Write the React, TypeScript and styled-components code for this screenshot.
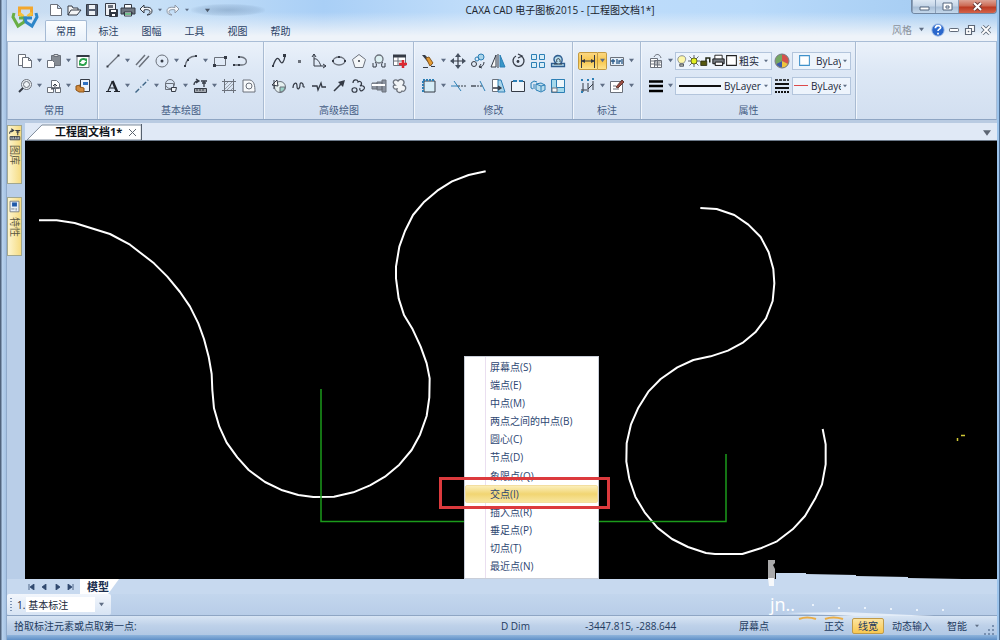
import React from "react";
import styled, { createGlobalStyle, css } from "styled-components";

const Global = createGlobalStyle`
  * { box-sizing: border-box; }
  body { margin: 0; background: #9dbfe6; }
  body, button, select, input {
    font-family: "Open Sans", "Noto Sans CJK SC", sans-serif;
    font-size: 10px;
    line-height: 14px;
    color: #2c4265;
  }
`;

/* ---------- icon artwork, all on a 16 unit grid ---------- */

const D = "#343a45";
const G = "#6b717b";
const B = "#2c7fb5";
const L = "#a9d4ea";

const art: Record<string, React.ReactNode> = {
  newFile: <path d="M2.500 2.500h7l4 4v7h-11zM9.500 2.500v4h4" fill="#fff" stroke={G} />,
  open: <path d="M2 13V4h4l1 2h5v2M2 13l3-5h10l-4 5z" fill="#f4f5f6" stroke={D} />,
  save: <><path d="M2.500 2.500h11v11h-11z" fill="#566072" stroke={D} /><path d="M5 3h6v4H5zM5 9h6v4H5z" fill="#eef2f6" /></>,
  saveAs: <><path d="M3.500 1.500h10v12h-10z" fill="#eef0f4" stroke={D} /><path d="M6 3h5v3H6z" fill={G} /><path d="M7.500 7.500h8v7h-8z" fill="#303640" stroke={D} /><path d="M9 8h5v2H9zM10 12h3v2h-3z" fill="#fff" /></>,
  print: <><path d="M4.500 6V2.500h7V6M4.500 10v4h7v-4" fill="#fff" stroke={D} /><path d="M1 6h14v6h-3v-2H4v2H1z" fill="#6f7681" stroke={D} /><path d="M5 12h6" stroke="#44a867" strokeWidth="1.500" /></>,
  undo: <path d="M2 7l4-4v2.500c6-1 8 1 8 3.500s-2 4-5 4c2-1 3-2 3-3.500S9 7 6 8v3z" fill="#f2f5f8" stroke={D} />,
  redo: <path d="M14 7l-4-4v2.500c-6-1-8 1-8 3.500s2 4 5 4c-2-1-3-2-3-3.500S7 7 10 8v3z" fill="#f2f5f8" stroke="#8e98a6" />,
  copy: <><path d="M1.500 1.500h7v11h-7z" fill="#fff" stroke={G} /><path d="M5.500 4.500h6l3 3v7h-9zM11.500 4.500v3h3" fill="#fff" stroke={G} /></>,
  paste: <><path d="M5.500 2.500h9v10h-9z" fill="#858b93" stroke={G} /><path d="M8 1.500h4v2H8z" fill="#ddd" stroke={G} /><path d="M1.500 7.500h5l2 2v5h-7z" fill="#fff" stroke={G} /></>,
  refresh: <><path d="M2 2.500h12v12H2z" fill="#fff" stroke={G} /><path d="M1.500 3h13" stroke={D} strokeWidth="2" /><path d="M5 9c0-3 4-4 6-2V5.500M11 9c0 3-4 4-6 2v1.500" fill="none" stroke="#2aa24c" strokeWidth="2" /></>,
  magnify: <><circle cx="9.500" cy="6.500" r="5" fill="#eef2f6" stroke={G} /><circle cx="9.500" cy="6.500" r="3" fill="none" stroke={G} /><path d="M6 10l-4 4" stroke={D} strokeWidth="2" /></>,
  insert: <><path d="M5.500 2.500h5l3 3v5h-8zM1.500 9.500h6v5h-6zM9.500 9.500h5v5h-5z" fill="#fff" stroke={G} /><path d="M5 11c4 0 4-1 4-5M7 8l2-2 2 2" fill="none" stroke={D} /></>,
  match: <><path d="M5.500 1.500h9v12h-9z" fill="#eaf2fb" stroke={D} /><path d="M8 4h5v3H8z" fill="#2e70c0" /><path d="M1 8l4-1v2l4 1v4H4L1 12z" fill="#d18a3d" stroke="#8d5418" /></>,
  line: <><path d="M3 13L13 3" stroke={G} strokeWidth="1.300" /><path d="M1.500 12.500h2v2h-2zM12.500 1.500h2v2h-2z" fill={D} /></>,
  parallel: <path d="M2 12L11 2M5 14l10-11" stroke={G} strokeWidth="1.500" fill="none" />,
  circle: <><circle cx="8" cy="8" r="6" fill="none" stroke={G} /><circle cx="8" cy="8" r="1.500" fill={D} /></>,
  arc: <><path d="M2 14C3 7 7 3 13 3" fill="none" stroke={G} strokeWidth="1.300" /><path d="M1 12h2v2H1zM12 2h2v2h-2zM4 6h2v2H4z" fill={D} /></>,
  rect: <><path d="M2.500 4.500h11v8h-11z" fill="none" stroke={G} /><path d="M1 11h3v3H1zM12 3h3v3h-3z" fill={D} /></>,
  pline: <><path d="M3 12h7c6 0 6-7-1-8H7" fill="none" stroke={G} strokeWidth="1.300" /><path d="M1 11h2v2H1zM6 11h2v2H6zM6 3h2v2H6z" fill={D} /></>,
  text: <><path d="M1 13.500h5M9 13.500h6M3 13L7.500 3M5 10h5" stroke="#20242c" strokeWidth="1.200" fill="none" /><path d="M7.500 3l4.500 10.500" stroke="#20242c" strokeWidth="2.500" /></>,
  axis: <path d="M1.500 14.500L15 1" stroke="#3d6485" strokeWidth="1.400" strokeDasharray="5 2 1 2" />,
  block: <><circle cx="7" cy="6" r="4.500" fill="none" stroke={G} /><path d="M2.500 5.500h8v6h-8z" fill="none" stroke={G} /><path d="M8.500 9.500h5l-1 4h-4z" fill="#eef2f6" stroke={D} /></>,
  gallery: <><path d="M2 7c0-3 2-4 4-4M4 1l3 2-3 2M9 3h6M12 3v6M10 5h4" fill="none" stroke={D} strokeWidth="1.300" /><path d="M2.500 10.500h12v4h-12z" fill="#a4a9b0" stroke={D} /><path d="M5 10v3M8 10v3M11 10v3" stroke={D} /></>,
  hatch: <><path d="M3.500 1v14M12.500 1v14M1 3.500h14M1 12.500h14" stroke={G} fill="none" /><path d="M4 7l3-3M4 11l7-7M6 12l6-6M10 12l2-2" stroke="#9aa0a8" fill="none" /></>,
  region: <><path d="M2 2h7c4 1 5 5 5 12H2z" fill="#f7f9fb" stroke={G} /><circle cx="8" cy="8" r="3" fill="none" stroke={G} /></>,
  spline: <><path d="M2 13c3-9 5-9 7-5s4 1 5-5" fill="none" stroke={D} strokeWidth="1.300" /><path d="M1 12h2v2H1zM12 1h3v3h-3z" fill={D} /></>,
  dot: <path d="M7 7h3v3H7z" fill={G} />,
  formula: <><path d="M3 1v12h12M1 4l2-3 2 3M12 11l3 2-3 2M3 6c3-1 5 2 7 7" fill="none" stroke={D} /></>,
  ellipse: <><ellipse cx="8" cy="8" rx="6" ry="4" fill="none" stroke={G} strokeWidth="1.300" /><path d="M1 7h2v2H1zM13 7h2v2h-2zM7 3h2v2H7z" fill={D} /></>,
  polygon: <><path d="M8 1.500l6.500 5-2.500 8H4l-2.500-8z" fill="#f3f6f8" stroke={G} /><circle cx="8" cy="8" r="1" fill={D} /></>,
  detail: <><circle cx="8" cy="6" r="4" fill="#ddf1f3" stroke={G} strokeWidth="1.300" /><path d="M2 14h3c1-3 0-4-1-5M14 14h-3c-1-3 0-4 1-5M2 14v-4M14 14v-4" fill="none" stroke={D} /></>,
  table: <><path d="M2.500 2.500h12v10h-12z" fill="#fff" stroke={G} /><path d="M2 3h13" stroke={D} strokeWidth="3" /><path d="M2 8h9M7 4v9" stroke={G} /><path d="M12 7v8M8 11h8" stroke="#dd2831" strokeWidth="2.500" /></>,
  section: <><circle cx="9" cy="9" r="5.500" fill="#e4efef" stroke={G} /><path d="M9 9h5a5 5 0 0 1-5 5z" fill="#9bd3c8" stroke={G} /><path d="M1 7l5-5 1 6zM3 2v9" fill="#fff" stroke={D} /></>,
  wave: <path d="M2 10c0-5 4-7 4-2s3 3 3-1 4-2 3 2M12 9h2" fill="none" stroke={D} strokeWidth="1.200" />,
  brk: <path d="M1 8h5l1 4 3-7 1 4h4" fill="none" stroke={D} strokeWidth="1.300" />,
  arrow: <><path d="M3 13l8-8" stroke={D} strokeWidth="1.600" /><path d="M14 2l-2 7-5-5z" fill={D} /></>,
  cloud3: <path d="M2 5c0-4 5-4 5-1 3-2 5 2 2 4 4-1 6 2 3 4-2 2-4 0-3-2M1 12c0-3 5-3 5 0s-5 3-5 0z" fill="none" stroke={D} strokeWidth="1.200" />,
  shaft: <><path d="M1 5h5v6H1zM6 4h5v8H6zM11 2h4v12h-4z" fill="#8b93a0" stroke={G} /><path d="M1 7h13" stroke="#fff" strokeWidth="2" /></>,
  revcloud: <path d="M4 7C0 4 4 0 7 3c3-4 8 0 5 4 5 1 2 8-1 6-2 3-6 1-5-2-4 1-5-4-2-4z" fill="#f1f4f6" stroke={G} strokeWidth="1.300" />,
  erase: <><path d="M1 2l3 0 8 8-2 3z" fill={D} /><path d="M5 5l3-1 4 6-3 3z" fill="#e39a31" stroke="#8a5b22" /><path d="M2 14.500h5M10 13.500h4" stroke={D} /></>,
  move: <><path d="M8 2v12M2 8h12" stroke={D} strokeWidth="1.200" /><path d="M8 0l3 4H5zM8 16l3-4H5zM0 8l4-3v6zM16 8l-4-3v6z" fill="#46505f" /></>,
  dup: <><circle cx="11" cy="4" r="3" fill={L} stroke={B} /><circle cx="7" cy="6" r="2" fill="none" stroke={B} /><circle cx="4" cy="11" r="2.500" fill="none" stroke={D} /><path d="M14 9c0 3-2 5-5 5M11 11l-2 3 3 1" fill="none" stroke={D} /></>,
  mirror: <><path d="M6 2v12H1z" fill="#f8f8f8" stroke={D} /><path d="M10 2v12h5z" fill="#3897c8" stroke={B} /><path d="M8 1v14" stroke={D} /></>,
  rotate: <><path d="M6 3a5.500 5.500 0 1 0 5 0M8 1l4 2-4 2" fill="none" stroke={D} strokeWidth="1.300" /><circle cx="8" cy="8.500" r="1.400" fill={D} /></>,
  array: <path d="M1.500 1.500h5v5h-5zM9.500 1.500h5v5h-5zM1.500 9.500h5v5h-5zM9.500 9.500h5v5h-5z" fill="#d7edf7" stroke={B} />,
  offset: <><path d="M1.500 13.500v-3h5c-4-3-3-7 1-8 5 0 6 5 3 8h4v3z" fill="#b7ddec" stroke="#2f5e90" strokeWidth="1.300" /><path d="M4 11h8M7 9c-2-4 4-5 3 0" fill="none" stroke={D} /></>,
  stretch: <><path d="M3 3h11v11H3z" fill="#d6edf7" stroke={D} /><path d="M2 14V2h12" fill="none" stroke={B} strokeWidth="2" strokeDasharray="2 1" /></>,
  trim: <><path d="M1 8h7M4 3l7 10" stroke={B} fill="none" /><path d="M8 8h8" stroke={D} strokeDasharray="2 1" /></>,
  extend: <><path d="M1 8h5" stroke={D} strokeWidth="1.300" /><path d="M7 8h5" stroke={D} strokeDasharray="2 1" /><path d="M10 3l5 10" stroke={B} /></>,
  scale: <><path d="M2.500 1.500h6v12h-6z" fill="#fff" stroke={G} /><path d="M8 2h3l4 12H8z" fill={L} stroke={B} /><path d="M3 10h7M8 8l3 2-3 2" fill="none" stroke={D} strokeWidth="1.300" /></>,
  breakAt: <><path d="M5 3.500H1.500v10h13v-10H11" fill="#eef4fa" stroke={D} /><path d="M3 3h4M9 3h4" stroke={B} strokeWidth="2" /></>,
  explode: <path d="M1 5l3-2 3 1M1 5v5l2 1M6 6l5-1 4 2v5l-4 2-5-2zM6 6l5 2 4-1M11 8v5M4 6v5" fill="#b9dded" stroke={B} />,
  corner: <><path d="M1.500 1.500h13v13h-13z" fill="#a5d9eb" stroke={B} /><path d="M6.500 1.500h8v8h-8z" fill="#eef7fb" stroke={B} /><path d="M2 10h5v4H2z" fill="#f6f9fb" stroke={G} /></>,
  dimension: <><path d="M1.500 2v13M14.500 2v13M2 8h12" stroke={D} /><path d="M1 8l4-2v4zM15 8l-4-2v4z" fill={D} /></>,
  tolerance: <><path d="M1.500 4.500h13v8h-13z" fill="#e5eff8" stroke={G} /><path d="M4 6v5M2 8h4M8 6v5M10 11V8h2M13 6v5" stroke="#285887" fill="none" strokeWidth="1.300" /></>,
  coord: <><path d="M3 5v9M8 5v9M13 3v9M1 12h6M8 11l5-5" stroke={D} fill="none" /><path d="M1 1h2v2H1zM7 1h2v2H7zM12 0h2v2h-2zM1 13h2v2H1z" fill={B} /></>,
  edit: <><path d="M1.500 3.500h12v11h-12z" fill="#fff" stroke={G} /><path d="M4 8h3M4 11h6" stroke={G} /><path d="M7 9l6-7 2 2-6 6z" fill="#9c4e42" stroke="#603630" /></>,
  layers: <><path d="M2.500 5.500h7v9h-7zM6.500 7.500h7v7h-7z" fill="#fff" stroke={G} /><path d="M6 4c2-4 6-3 7 1M3 8h5M3 11h9M7 9h6M7 12h6" fill="none" stroke={G} /></>,
  bulb: <><path d="M5 11c-5-5-2-10 3-10s7 5 2 10z" fill="#fdf7a9" stroke={G} /><path d="M5 12h5v3H5z" fill="#b8bbb1" stroke={D} /></>,
  sun: <><path d="M8 0v16M0 8h16M2 2l12 12M14 2L2 14" stroke={D} /><circle cx="8" cy="8" r="4" fill="#e2ee24" stroke="#404508" /></>,
  lock: <><path d="M1 8h8v6H1z" fill="#555810" stroke="#20230d" /><path d="M8 8V4h5v6" fill="none" stroke="#252914" strokeWidth="2" /></>,
  printer: <><path d="M3.500 6V1.500h9V6M4 10v4h9v-4" fill="#fff" stroke="#000" /><path d="M1 6h14v6H1z" fill="#777d84" stroke="#000" /><path d="M4 10h9v4H4z" fill="#fff" stroke="#000" /></>,
  whiteBox: <path d="M2 2h12v12H2z" fill="#fff" stroke="#222" strokeWidth="1.300" />,
  blueBox: <path d="M2 2h12v12H2z" fill="#fff" stroke="#3f91ca" strokeWidth="1.300" />,
  colors: <><circle cx="8" cy="8" r="7" fill="#f0c43c" /><path d="M8 8V1a7 7 0 0 0-6 10z" fill="#73a763" /><path d="M8 8V1a7 7 0 0 1 6 10z" fill="#d6504b" /><path d="M8 8l6 3a7 7 0 0 1-12 0z" fill="#3c5cab" /><path d="M8 8l6 3a7 7 0 0 1-6 4z" fill="#f0c43c" /><circle cx="8" cy="8" r="7" fill="none" stroke="#71788b" /></>,
  weight: <path d="M1 3.500h14M1 8h14M1 13h14" stroke="#000" strokeWidth="2.500" />,
  lineTypes: (
    <>
      <path d="M1 2h14" stroke="#111" strokeWidth="1.500" strokeDasharray="3 1" />
      <path d="M1 6h14M1 10h14" stroke="#111" strokeWidth="2" />
      <path d="M1 14h14" stroke="#111" strokeWidth="2" strokeDasharray="2 1" />
    </>
  ),
  sheet: <><path d="M2.500 1.500h11v13h-11z" fill="#e9f0f8" stroke={G} /><path d="M5 3h6v5H5z" fill="#1f58a9" /><path d="M4 11h4M10 10v3" stroke={G} /></>,
  mdiMin: <rect x="2" y="6" width="12" height="4" rx="1" fill="#fff" stroke="#5d6776" strokeWidth="1.300" />,
  mdiMax: <><path d="M6 2h8v8H6z" fill="#fff" stroke="#5d6776" strokeWidth="1.500" /><path d="M2 6h8v8H2z" fill="#fff" stroke="#5d6776" strokeWidth="1.500" /><path d="M5 9h2v2H5z" fill="#5d6776" /></>,
  mdiClose: <><path d="M3 3l10 10M13 3L3 13" stroke="#5d6776" strokeWidth="5" /><path d="M3 3l10 10M13 3L3 13" stroke="#fff" strokeWidth="2.500" /></>,
  help: <><circle cx="8" cy="8" r="7" fill="#2a67cc" stroke="#93b4e4" /><path d="M5 6c0-4 6-4 6-1 0 2-3 2-3 4M8 11v2" fill="none" stroke="#fff" strokeWidth="2" /></>,
};

const Glyph = styled.svg`
  display: block;
  flex: none;
`;

const Icon = ({ name, size = 16 }: { name: string; size?: number }) => (
  <Glyph width={size} height={size} viewBox="0 0 16 16" aria-hidden="true">
    {art[name]}
  </Glyph>
);

const Caret = ({ color = "#5f6e85", size = 5 }: { color?: string; size?: number }) => (
  <Glyph width={size} height={size} viewBox="0 0 6 6" aria-hidden="true">
    <path d="M0 1h6L3 5z" fill={color} />
  </Glyph>
);

/* ---------- frame ---------- */

const Window = styled.div`
  display: flex;
  flex-direction: column;
  min-height: 100vh;
  padding: 0 3px 5px 7px;
  background:
    linear-gradient(90deg, #50637c 0, #50637c 1px, #b9d3ef 2px, #a5c2e3 6px, #7b93b4 7px, transparent 7px),
    linear-gradient(270deg, #4c6d93 0, #4c6d93 1px, #9cc4ec 1px, #9cc4ec 3px, transparent 3px),
    linear-gradient(0deg, #5f90c7 0, #8fb4dc 5px, transparent 5px),
    linear-gradient(180deg, #bcdcfa 0, #b0d0f2 100%);
`;

const Header = styled.header`
  display: grid;
  grid-template-columns: 38px minmax(0, 1fr);
  height: 41px;
  background:
    linear-gradient(180deg, transparent 12px, #eef3f9 36px),
    linear-gradient(90deg, #c9dcf1 0, #c7e0f7 15%, #a9cff6 32%, #c2defa 48%, #b9dafa 75%, #9fc8f0 100%);
`;

const LogoButton = styled.button`
  display: flex;
  padding: 4px 0 0 4px;
  border: 0;
  background: none;
`;

const HeaderMain = styled.div`
  min-width: 0;
`;

const TitleRow = styled.div`
  display: flex;
  height: 20px;
`;

const QuickBar = styled.div`
  display: flex;
  align-items: center;
  width: 220px;
  padding-left: 2px;
`;

const QuickButton = styled.button`
  display: grid;
  place-items: center;
  width: 18px;
  height: 18px;
  padding: 0;
  border: 0;
  background: none;
`;

const QuickMore = styled(QuickButton)`
  width: 9px;
`;

const Haze = styled.span`
  flex: 1;
  display: flex;
  align-items: center;
  height: 12px;
  padding-left: 14px;
  border-radius: 6px;
  background: radial-gradient(ellipse, rgba(86, 116, 150, 0.35), rgba(110, 140, 175, 0.18) 60%, transparent 75%);
`;

const Title = styled.h1`
  flex: 1;
  margin: 0;
  padding-right: 56px;
  font-size: 10px;
  line-height: 20px;
  font-weight: 400;
  text-align: center;
  color: #20242c;
`;

const WindowButtons = styled.div`
  display: flex;
  height: 14px;
  border: 1px solid #7187a2;
  border-top: 0;
  border-radius: 0 0 4px 4px;
  overflow: hidden;
`;

const WindowButton = styled.button<{ $close?: boolean }>`
  display: grid;
  place-items: center;
  width: ${(p) => (p.$close ? 38 : 23)}px;
  padding: 0;
  border: 0;
  border-left: 1px solid #8ba0b9;
  background: ${(p) =>
    p.$close
      ? "linear-gradient(180deg, #dda395 0, #cc6a54 45%, #bb3a22 55%, #d4634a 100%)"
      : "linear-gradient(180deg, #dde8f4 0, #c5d5e7 45%, #a9bfd7 55%, #c4d8ec 100%)"};
`;

const TabRow = styled.div`
  display: flex;
  justify-content: space-between;
  height: 21px;
`;

const Tabs = styled.nav`
  display: flex;
`;

const Tab = styled.button<{ $active?: boolean }>`
  width: ${(p) => (p.$active ? 42 : 43)}px;
  padding: 0;
  border: 1px solid transparent;
  border-bottom: 0;
  border-radius: 2px 2px 0 0;
  background: none;
  ${(p) =>
    p.$active &&
    css`
      border-color: #a5bad4;
      background: linear-gradient(180deg, #fbfdff, #e9f1fa);
    `}
`;

const MdiTools = styled.div`
  display: flex;
  align-items: center;
  gap: 2px;
  padding: 0 4px 2px 0;
`;

const StyleButton = styled.button`
  display: flex;
  align-items: center;
  gap: 7px;
  padding: 0 5px 0 0;
  border: 0;
  background: none;
  color: #8b929c;
`;

const MdiButton = styled.button`
  display: grid;
  place-items: center;
  width: 14px;
  height: 14px;
  padding: 0;
  border: 0;
  background: none;
`;

/* ---------- ribbon ---------- */

const Ribbon = styled.section`
  display: flex;
  height: 79px;
  border: 1px solid #a9bdd6;
  border-bottom-color: #8ea5c3;
  background: linear-gradient(180deg, #eaf1fa 0, #dce7f5 40%, #d2dff0 100%);
`;

const Group = styled.div`
  display: flex;
  flex-direction: column;
  padding: 6px 4px 0 5px;
  border-right: 1px solid #a9bbd2;
  box-shadow: 1px 0 0 #f1f6fc;

  &:first-child {
    padding-left: 7px;
  }
`;

const ToolRow = styled.div`
  display: flex;
  align-items: center;
  height: 25px;
`;

const GroupName = styled.div`
  padding-top: 5px;
  text-align: center;
  color: #455d84;
`;

const ToolButton = styled.button<{ $on?: boolean }>`
  display: grid;
  place-items: center;
  width: 20px;
  height: 18px;
  padding: 0;
  border: 1px solid transparent;
  background: none;
  ${(p) =>
    p.$on &&
    css`
      border-color: #c49b42;
      border-radius: 2px 0 0 2px;
      background: linear-gradient(180deg, #fbd781, #f8c64c 50%, #fde28a);
    `}
`;

const DropButton = styled(ToolButton)`
  width: 9px;
  border-radius: 0 2px 2px 0;
  border-left: ${(p) => (p.$on ? 0 : 1)}px solid transparent;
`;

const Combo = styled.label<{ $width: number; $gap: number }>`
  display: flex;
  align-items: center;
  width: ${(p) => p.$width}px;
  height: 18px;
  padding: 0 3px 0 ${(p) => p.$gap}px;
  border: 1px solid #b3c5dc;
  background: #edf4fc;
`;

const ComboSelect = styled.select`
  appearance: none;
  flex: 1;
  width: 20px;
  min-width: 0;
  margin: 0 2px 0 1px;
  padding: 0;
  border: 0;
  background: none;
  color: #20283a;
`;

const Swatch = styled.span`
  margin-right: 4px;
`;

const LineSample = styled.span<{ $width: number; $color: string; $thick: number }>`
  flex: none;
  width: ${(p) => p.$width}px;
  height: ${(p) => p.$thick}px;
  margin-right: 2px;
  background: ${(p) => p.$color};
`;

const Split = styled.div`
  height: 3px;
  background: #b9cbe2;
`;

/* ---------- work area ---------- */

const Work = styled.main`
  flex: 1;
  display: grid;
  grid-template-columns: 18px minmax(0, 1fr);
  background: #b9cee8;
`;

const SideBar = styled.aside`
  display: flex;
  flex-direction: column;
  gap: 13px;
  padding: 2px 3px 0 0;
`;

const SideTab = styled.button`
  display: flex;
  align-items: center;
  gap: 4px;
  height: 59px;
  padding: 2px 0 0;
  border: 1px solid #a2a78f;
  background: linear-gradient(90deg, #fdf5cf, #f6dc82);
  writing-mode: vertical-rl;
  text-orientation: sideways;
  color: #59563e;
`;

const Document = styled.div`
  display: flex;
  flex-direction: column;
`;

const DocTabs = styled.div`
  display: flex;
  align-items: flex-end;
  justify-content: space-between;
  height: 18px;
  padding-right: 5px;
  background: #e0e9f6;
  border-bottom: 1px solid #6c7989;
`;

const DocTab = styled.div`
  position: relative;
  display: flex;
  align-items: center;
  gap: 6px;
  height: 16px;
  padding: 0 4px 0 30px;
  border-right: 1px solid #55606e;
`;

const Slant = styled.svg`
  position: absolute;
  inset: 0;
  width: 100%;
  height: 100%;
`;

const DocName = styled.span`
  position: relative;
  font-size: 11px;
  font-weight: 700;
  color: #10141b;
`;

const DocClose = styled(MdiButton)`
  position: relative;
  width: 9px;
`;

const DocMore = styled(MdiButton)`
  width: 10px;
`;

const Canvas = styled.div`
  position: relative;
  flex: 1;
  min-height: 438px;
  background: #000;
  overflow: hidden;
`;

const Drawing = styled.svg`
  position: absolute;
  inset: 0;
  width: 100%;
  height: 100%;
`;

const Menu = styled.div`
  position: absolute;
  left: 439px;
  top: 215px;
  display: flex;
  flex-direction: column;
  width: 135px;
  height: 223px;
  padding: 1px 0 3px;
  border: 1px solid #c9ced8;
  background: linear-gradient(90deg, #fff 20px, #eadff0 20px, #eadff0 21px, #fff 21px);
`;

const MenuItem = styled.button<{ $on?: boolean }>`
  flex: 1;
  padding: 0 0 0 24px;
  border: 1px solid transparent;
  background: none;
  text-align: left;
  line-height: 16px;
  color: #2d4672;
  ${(p) =>
    p.$on &&
    css`
      border-color: #f3dea0;
      border-radius: 2px;
      background: linear-gradient(180deg, #fbeeb9, #f1d572 50%, #f8e69f);
    `}
`;

const Highlight = styled.div`
  position: absolute;
  left: 414px;
  top: 336px;
  width: 171px;
  height: 32px;
  border: 3px solid #dc3a3d;
  pointer-events: none;
`;

/* ---------- bottom bars ---------- */

const SheetRow = styled.div`
  display: flex;
  align-items: stretch;
  height: 15px;
  padding-left: 18px;
  background: #c7d9ef;
`;

const SheetNav = styled.div`
  display: flex;
  width: 55px;
`;

const SheetNavButton = styled(MdiButton)`
  width: 13px;
  height: 15px;
`;

const SheetTab = styled.button`
  padding: 0 10px 0 7px;
  border: 0;
  background: #fff;
  clip-path: polygon(0 0, 100% 0, 72% 100%, 0 100%);
  font-size: 11px;
  font-weight: 700;
  line-height: 15px;
  color: #1c2f50;
`;

const StyleRow = styled.div`
  display: flex;
  height: 21px;
  background: linear-gradient(180deg, #c3d6ed, #b8cde8);
`;

const StyleBar = styled.div`
  display: flex;
  align-items: center;
  width: 104px;
  padding: 0 7px 0 3px;
  border-radius: 2px;
  background: linear-gradient(180deg, #f2f6fc, #d7e4f4);
  color: #1a2230;
`;

const Grip = styled.span`
  width: 2px;
  height: 13px;
  margin-right: 5px;
  background: repeating-linear-gradient(180deg, #7c93b4 0, #7c93b4 1px, transparent 1px, transparent 3px);
`;

const StyleField = styled.label`
  flex: 1;
  display: flex;
  align-items: center;
`;

const StyleSelect = styled(ComboSelect)`
  height: 15px;
  margin: 0 4px 0 1px;
  padding-left: 2px;
  background: #fff;
`;

const Status = styled.footer`
  display: grid;
  grid-template-columns: 487fr 84fr 154fr 258fr;
  align-items: center;
  height: 20px;
  padding-left: 7px;
  border-top: 1px solid #8fa6c4;
  background: linear-gradient(180deg, #d8e5f4 0, #bed1e9 50%, #b1c8e4 100%);
  white-space: nowrap;
  color: #233b60;
`;

const Modes = styled.div`
  display: flex;
  align-items: center;
  justify-content: space-between;
  padding-right: 18px;
`;

const ModeSet = styled.div`
  display: flex;
  align-items: center;
  gap: 8px;
`;

const Mode = styled.button<{ $on?: boolean }>`
  display: flex;
  align-items: center;
  gap: 8px;
  height: 16px;
  padding: 0;
  border: 0;
  background: none;
  color: #233b60;
  ${(p) =>
    p.$on &&
    css`
      padding: 0 5px;
      border: 1px solid #c09b4a;
      border-radius: 2px;
      background: linear-gradient(180deg, #fce4a0, #f9c850);
    `}
`;

const SmartMode = styled(Mode)`
  margin-left: 7px;
`;

const Mark = styled.svg`
  position: absolute;
  right: 0;
  bottom: 0;
  width: 240px;
  height: 90px;
  pointer-events: none;
`;

const Shell = styled.div`
  position: relative;
`;

/* ---------- data ---------- */

type Tool = [icon: string, label: string, drop?: boolean, on?: boolean];

const groups: { name: string; rows: Tool[][] }[] = [
  {
    name: "常用",
    rows: [
      [["copy", "复制", true], ["paste", "粘贴", true], ["refresh", "刷新"]],
      [["magnify", "缩放", true], ["insert", "插入", true], ["match", "特性匹配"]],
    ],
  },
  {
    name: "基本绘图",
    rows: [
      [["line", "直线", true], ["parallel", "平行线"], ["circle", "圆", true], ["arc", "圆弧", true], ["rect", "矩形"], ["pline", "多段线"]],
      [["text", "文字", true], ["axis", "中心线", true], ["block", "块", true], ["gallery", "图库", true], ["hatch", "剖面线"], ["region", "填充"]],
    ],
  },
  {
    name: "高级绘图",
    rows: [
      [["spline", "样条"], ["dot", "点"], ["formula", "公式曲线"], ["ellipse", "椭圆"], ["polygon", "正多边形"], ["detail", "局部放大"], ["table", "表格"]],
      [["section", "圆弧拟合"], ["wave", "波浪线"], ["brk", "双折线"], ["arrow", "箭头"], ["cloud3", "轮廓"], ["shaft", "轴孔"], ["revcloud", "云线"]],
    ],
  },
  {
    name: "修改",
    rows: [
      [["erase", "删除", true], ["move", "平移"], ["dup", "平移复制"], ["mirror", "镜像"], ["rotate", "旋转"], ["array", "阵列"], ["offset", "等距线"]],
      [["stretch", "拉伸", true], ["trim", "裁剪"], ["extend", "延伸"], ["scale", "缩放"], ["breakAt", "打断"], ["explode", "分解"], ["corner", "过渡"]],
    ],
  },
  {
    name: "标注",
    rows: [
      [["dimension", "尺寸标注", true, true], ["tolerance", "形位公差", true]],
      [["coord", "坐标标注", true], ["edit", "标注编辑", true]],
    ],
  },
];

const snaps = [
  "屏幕点(S)", "端点(E)", "中点(M)", "两点之间的中点(B)", "圆心(C)", "节点(D)",
  "象限点(Q)", "交点(I)", "插入点(R)", "垂足点(P)", "切点(T)", "最近点(N)",
];

const leftCurve =
  "27,181 80,181 134,189 240,222 300,254 372,310 412,350 450,396 480,440 505,490 522,537 536,590 545,642 547,690 552,745 568,800 590,848 622,892 656,930 705,966 757,991 805,1005 850,1011 912,1010 970,997 1020,976 1065,950 1108,914 1145,870 1170,824 1190,768 1198,712 1199,655 1190,610 1172,560 1148,508 1122,465 1106,415 1098,355 1098,320 1108,260 1125,213 1149,165 1183,125 1222,92 1266,64 1316,45 1367,34";
const rightCurve =
  "301,39 350,42 403,60 445,89 482,126 506,172 520,222 523,265 518,318 498,370 466,412 430,442 384,467 332,484 280,495 232,517 182,552 145,590 115,638 93,688 80,745 79,800 88,852 106,905 134,952 172,998 216,1032 264,1056 318,1074 345,1077 427,1077 482,1060 531,1039 578,1003 615,963 647,908 666,868 677,808 677,748 668,702";

const Tools = ({ items }: { items: Tool[] }) => (
  <ToolRow>
    {items.map(([icon, label, drop, on]) => (
      <React.Fragment key={icon}>
        <ToolButton $on={on} aria-label={label}><Icon name={icon} /></ToolButton>
        {drop && <DropButton $on={on} aria-label={label + "选项"}><Caret size={5} /></DropButton>}
      </React.Fragment>
    ))}
  </ToolRow>
);

export default function App() {
  return (
    <Shell>
      <Global />
      <Window>
        <Header>
          <LogoButton aria-label="菜单">
            <Glyph width="28" height="27" viewBox="0 0 28 27" fill="none" strokeWidth="3">
              <path d="M8.500 12V4h12v8" stroke="#f3a72e" />
              <path d="M8 9l4.500 3.500M21 9l-4.500 3.500" stroke="#f6c23d" />
              <path d="M3 9l-1 4 5 9 6-4 1-4-6 0" stroke="#68ae45" />
              <path d="M25 9l1 4-5 9-6-4-1-4 7 0" stroke="#2e86c8" />
            </Glyph>
          </LogoButton>
          <HeaderMain>
            <TitleRow>
              <QuickBar>
                <QuickButton aria-label="新建"><Icon name="newFile" /></QuickButton>
                <QuickButton aria-label="打开"><Icon name="open" /></QuickButton>
                <QuickButton aria-label="保存"><Icon name="save" /></QuickButton>
                <QuickButton aria-label="另存为"><Icon name="saveAs" /></QuickButton>
                <QuickButton aria-label="打印"><Icon name="print" /></QuickButton>
                <QuickButton aria-label="撤销"><Icon name="undo" /></QuickButton>
                <QuickMore aria-label="撤销列表"><Caret size={4} /></QuickMore>
                <QuickButton aria-label="恢复"><Icon name="redo" /></QuickButton>
                <QuickMore aria-label="恢复列表"><Caret size={4} /></QuickMore>
                <Haze><Caret color="#4c5a6c" /></Haze>
              </QuickBar>
              <Title>CAXA CAD 电子图板2015 - [工程图文档1*]</Title>
              <WindowButtons>
                <WindowButton aria-label="最小化">
                  <Glyph width="11" height="9" viewBox="0 0 11 9"><path d="M1 5h9v3H1z" fill="#fff" stroke="#52647c" /></Glyph>
                </WindowButton>
                <WindowButton aria-label="最大化">
                  <Glyph width="11" height="9" viewBox="0 0 11 9"><path d="M1 1h9v7H1zM4 4h3v2H4z" fill="#fff" stroke="#52647c" /></Glyph>
                </WindowButton>
                <WindowButton $close aria-label="关闭">
                  <Glyph width="11" height="9" viewBox="0 0 11 9">
                    <path d="M2 1l7 7M9 1L2 8" stroke="#6b3a38" strokeWidth="4" />
                    <path d="M2 1l7 7M9 1L2 8" stroke="#fff" strokeWidth="2" />
                  </Glyph>
                </WindowButton>
              </WindowButtons>
            </TitleRow>
            <TabRow>
              <Tabs>
                {["常用", "标注", "图幅", "工具", "视图", "帮助"].map((t, i) => (
                  <Tab key={t} $active={i === 0}>{t}</Tab>
                ))}
              </Tabs>
              <MdiTools>
                <StyleButton>风格<Caret size={5} /></StyleButton>
                <MdiButton aria-label="帮助"><Icon name="help" size={14} /></MdiButton>
                <MdiButton aria-label="最小化文档"><Icon name="mdiMin" size={12} /></MdiButton>
                <MdiButton aria-label="还原文档"><Icon name="mdiMax" size={12} /></MdiButton>
                <MdiButton aria-label="关闭文档"><Icon name="mdiClose" size={12} /></MdiButton>
              </MdiTools>
            </TabRow>
          </HeaderMain>
        </Header>

        <Ribbon>
          {groups.map((g) => (
            <Group key={g.name}>
              {g.rows.map((r, i) => <Tools key={i} items={r} />)}
              <GroupName>{g.name}</GroupName>
            </Group>
          ))}
          <Group>
            <ToolRow>
              <ToolButton aria-label="图层"><Icon name="layers" /></ToolButton>
              <DropButton aria-label="图层选项"><Caret size={5} /></DropButton>
              <Combo $width={97} $gap={0}>
                <Icon name="bulb" size={12} />
                <Icon name="sun" size={12} />
                <Icon name="lock" size={12} />
                <Icon name="printer" size={13} />
                <Icon name="whiteBox" size={13} />
                <ComboSelect aria-label="当前图层"><option>粗实</option></ComboSelect>
                <Caret size={4} />
              </Combo>
              <ToolButton aria-label="颜色"><Icon name="colors" /></ToolButton>
              <Combo $width={59} $gap={5}>
                <Swatch><Icon name="blueBox" size={13} /></Swatch>
                <ComboSelect aria-label="当前颜色"><option>ByLayer</option></ComboSelect>
                <Caret size={4} />
              </Combo>
            </ToolRow>
            <ToolRow>
              <ToolButton aria-label="线宽"><Icon name="weight" /></ToolButton>
              <DropButton aria-label="线宽选项"><Caret size={5} /></DropButton>
              <Combo $width={97} $gap={3}>
                <LineSample $width={42} $thick={2} $color="#111" />
                <ComboSelect aria-label="当前线宽"><option>ByLayer</option></ComboSelect>
                <Caret size={4} />
              </Combo>
              <ToolButton aria-label="线型"><Icon name="lineTypes" /></ToolButton>
              <Combo $width={59} $gap={1}>
                <LineSample $width={14} $thick={1} $color="#dc4a4a" />
                <ComboSelect aria-label="当前线型"><option>ByLayer</option></ComboSelect>
                <Caret size={4} />
              </Combo>
            </ToolRow>
            <GroupName>属性</GroupName>
          </Group>
        </Ribbon>
        <Split />

        <Work>
          <SideBar>
            <SideTab><Icon name="gallery" size={13} />图库</SideTab>
            <SideTab><Icon name="sheet" size={13} />特性</SideTab>
          </SideBar>
          <Document>
            <DocTabs>
              <DocTab>
                <Slant viewBox="0 0 117 16" preserveAspectRatio="none" aria-hidden="true">
                  <path d="M2 16L17 1h100v15z" fill="#fff" stroke="#7f8c9b" />
                </Slant>
                <DocName>工程图文档1*</DocName>
                <DocClose aria-label="关闭工程图文档1">
                  <Glyph width="7" height="7" viewBox="0 0 7 7"><path d="M0 0l7 7M7 0L0 7" stroke="#5e656f" /></Glyph>
                </DocClose>
              </DocTab>
              <DocMore aria-label="文档列表"><Caret size={8} color="#5d6673" /></DocMore>
            </DocTabs>
            <Canvas>
              <Drawing aria-label="工程图" role="img">
                <g transform="translate(-25 -141)" fill="none">
                  <g stroke="#fff" strokeWidth="6" strokeLinejoin="round">
                    <polyline transform="translate(30 160) scale(.33333)" points={leftCurve} />
                    <polyline transform="translate(600 195) scale(.33333)" points={rightCurve} />
                  </g>
                  <path d="M321 389v132.500h405V454" stroke="#1b9b1b" strokeWidth="1.500" />
                  <path d="M957.500 441v-3M961 435.500h4" stroke="#d0c835" strokeWidth="1.500" />
                </g>
              </Drawing>
              <Menu role="menu">
                {snaps.map((s) => (
                  <MenuItem key={s} role="menuitem" $on={s === "交点(I)"}>{s}</MenuItem>
                ))}
              </Menu>
              <Highlight />
            </Canvas>
          </Document>
        </Work>

        <SheetRow>
          <SheetNav>
            {["M1 0v6M6 0L2 3l4 3z", "M5 0L1 3l4 3z", "M2 0l4 3-4 3z", "M6 0v6M1 0l4 3-4 3z"].map((d, i) => (
              <SheetNavButton key={d} aria-label={["第一页", "上一页", "下一页", "最后一页"][i]}>
                <Glyph width="7" height="6" viewBox="0 0 7 6"><path d={d} fill="#30496e" stroke="#30496e" strokeWidth=".8" /></Glyph>
              </SheetNavButton>
            ))}
          </SheetNav>
          <SheetTab>模型</SheetTab>
        </SheetRow>
        <StyleRow>
          <StyleBar>
            <Grip />
            <StyleField>
              1.
              <StyleSelect aria-label="标注样式"><option>基本标注</option></StyleSelect>
              <Caret />
            </StyleField>
          </StyleBar>
        </StyleRow>
        <Status>
          <span>拾取标注元素或点取第一点:</span>
          <span>D Dim</span>
          <span>-3447.815, -288.644</span>
          <Modes>
            <Mode>屏幕点</Mode>
            <ModeSet>
              <Mode>正交</Mode>
              <Mode $on>线宽</Mode>
              <Mode>动态输入</Mode>
              <SmartMode>智能 <Caret size={4} /></SmartMode>
            </ModeSet>
          </Modes>
        </Status>
      </Window>
      <Mark aria-hidden="true">
        <g transform="translate(-760 -550)">
          <path d="M776 573l30 0v1l50 1v1l52 1v1l54 1v1l35 1v0H776z" fill="#c7d9ef" />
          <path d="M768 560h7v3l-2 2 2 4v10h-7z" fill="#a9a9aa" />
          <path d="M768 578h6v8h-5z" fill="#f7f9fb" />
          <path d="M784 613l60-1 90 4h-80z" fill="#e4edf8" />
          <path d="M812 604h2v2h-2zM838 607h2v2h-2zM864 607h2v2h-2zM890 608h2v2h-2zM916 609h2v2h-2zM942 609h2v2h-2z" fill="#eaf2fb" />
          <text x="770" y="611" fill="#fff" fontFamily="Open Sans" fontSize="18">jn..</text>
          <path d="M799 619q8-3 17 0M825 619q8-3 18 0" stroke="#e9ad48" strokeWidth="2" fill="none" />
          <path d="M992 634h2M988 634h2M992 630h2M984 634h2M988 630h2M992 626h2" stroke="#7890b0" strokeWidth="2" />
        </g>
      </Mark>
    </Shell>
  );
}
